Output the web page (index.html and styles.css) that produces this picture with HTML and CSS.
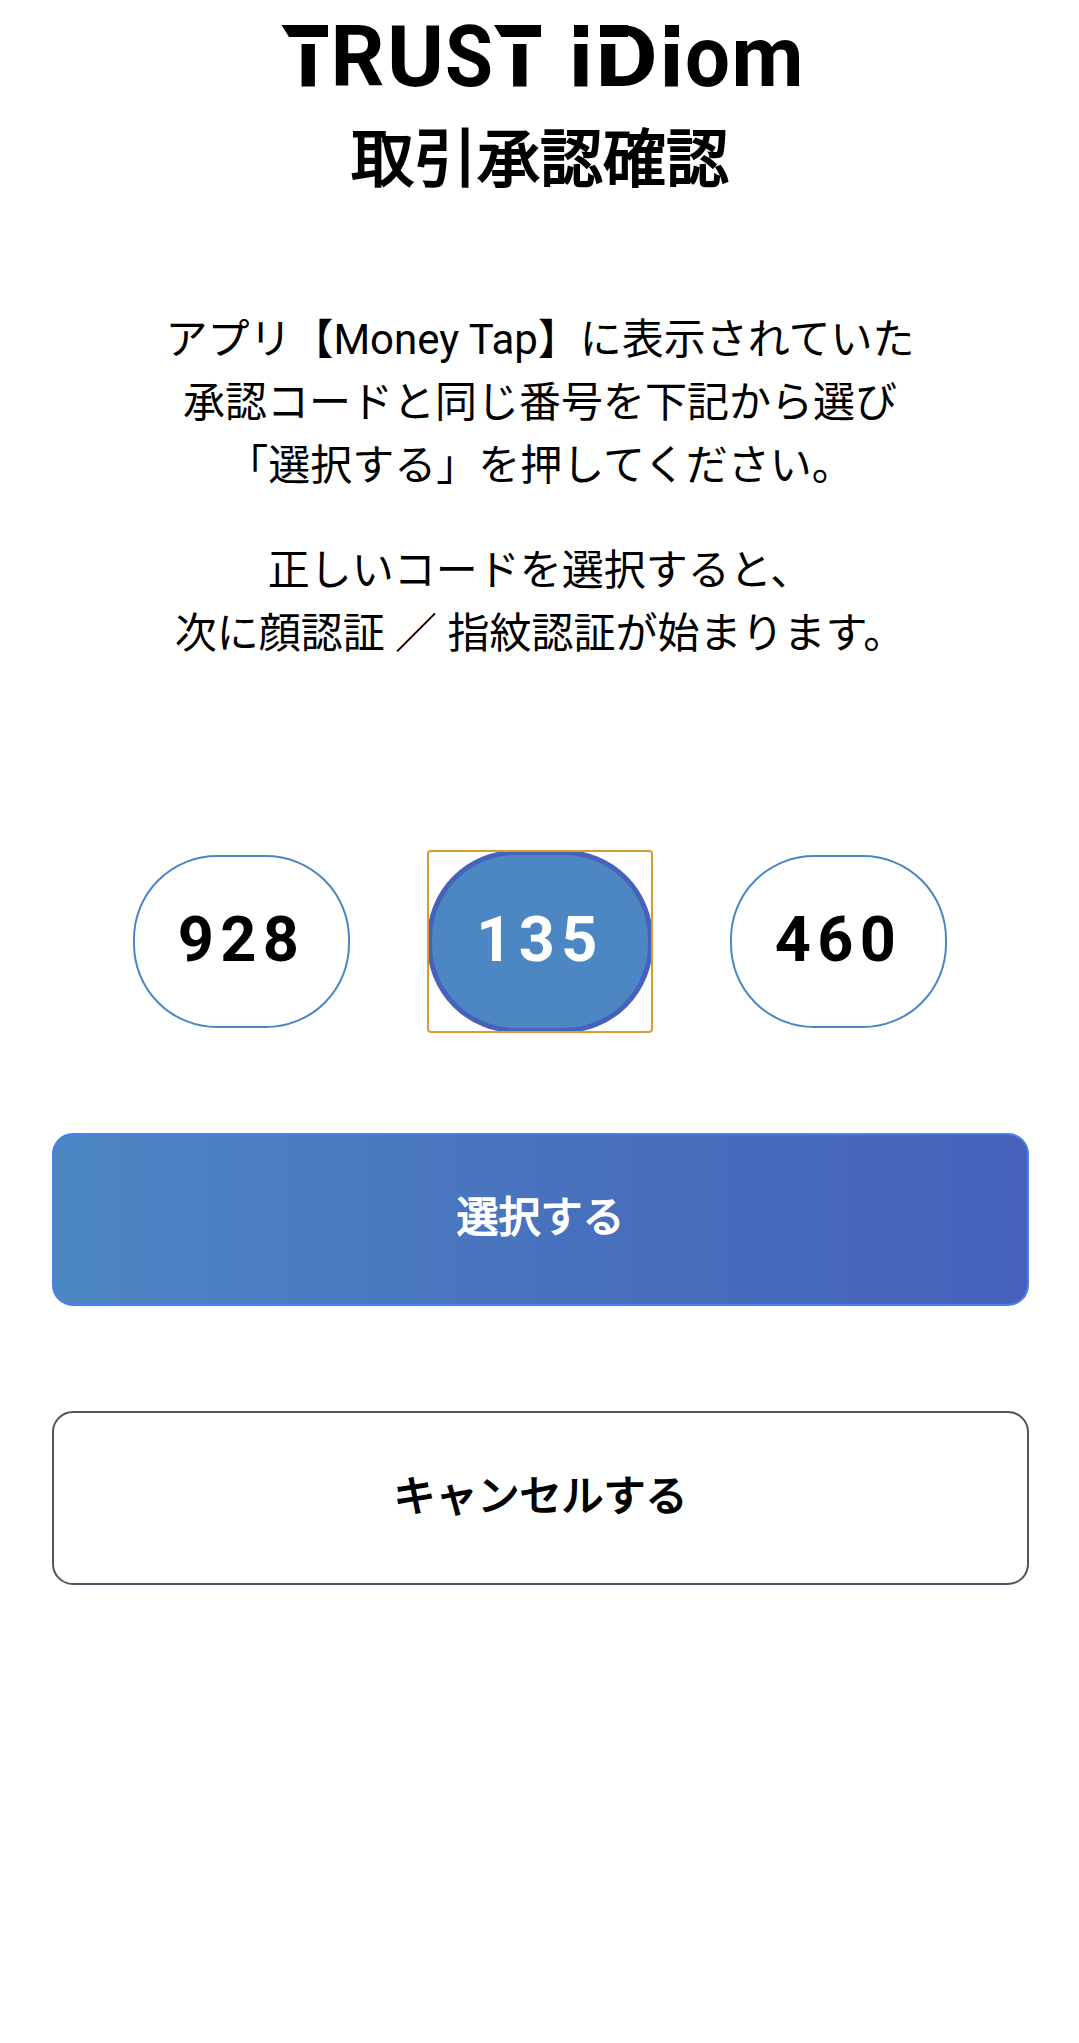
FILE: index.html
```html
<!DOCTYPE html>
<html lang="ja">
<head>
<meta charset="utf-8">
<title>取引承認確認</title>
<link rel="stylesheet" href="styles.css">
</head>
<body>
<main class="page">
  <header class="header">
    <svg class="logo" viewBox="280 20 520 70" role="img" aria-label="TRUST iDiom">
      <g class="logo-text">
        <text class="logo-stem" x="281.7" y="86">T</text>
        <text x="330.5" y="86" textLength="54" lengthAdjust="spacingAndGlyphs">R</text>
        <text x="387" y="86" textLength="57" lengthAdjust="spacingAndGlyphs">U</text>
        <text x="445" y="86" textLength="48" lengthAdjust="spacingAndGlyphs">S</text>
        <text class="logo-stem" x="493.2" y="86">T</text>
        <text class="logo-stem" x="569.5" y="86">i</text>
        <text x="595" y="86" textLength="63" lengthAdjust="spacingAndGlyphs">D</text>
        <text class="logo-stem" x="660" y="86">i</text>
        <text x="685" y="86" textLength="45" lengthAdjust="spacingAndGlyphs">o</text>
        <text x="731.5" y="86" textLength="72" lengthAdjust="spacingAndGlyphs">m</text>
      </g>
      <g class="logo-gap">
        <rect x="280" y="20" width="54" height="24"/>
        <rect x="493" y="20" width="53" height="24"/>
        <rect x="568" y="18" width="26" height="26"/>
        <rect x="598" y="36" width="22" height="8"/>
        <rect x="661" y="18" width="21" height="26"/>
      </g>
      <path d="M281.5 25H328V37H289ZM494 25H541V37H501.500ZM574 25H588V37H574ZM600 25H628V37H600ZM665 25H679V37H665Z"/>
    </svg>
    <h1 class="title">取引承認確認</h1>
  </header>
  <section class="guide">
    <p>アプリ【Money Tap】に表示されていた<br>承認コードと同じ番号を下記から選び<br>「選択する」を押してください。</p>
    <p>正しいコードを選択すると、<br>次に顔認証 ／ 指紋認証が始まります。</p>
  </section>
  <div class="codes">
    <button class="code">928</button>
    <button class="code code-selected">135</button>
    <button class="code">460</button>
  </div>
  <div class="actions">
    <button class="action action-primary">選択する</button>
    <button class="action">キャンセルする</button>
  </div>
</main>
</body>
</html>
```
FILE: styles.css
```css
* { box-sizing: border-box; }
body {
  margin: 0;
  background: #fff;
  color: #000;
  font-family: Roboto, "Noto Sans CJK JP", sans-serif;
}
button { font-family: inherit; margin: 0; padding: 0; }
.page {
  min-height: 2043px;
  padding: 20px 51px 0 52px;
}
.header {
  display: flex;
  flex-direction: column;
  align-items: center;
}
.logo { display: block; width: 520px; height: 70px; overflow: visible; }
.logo-text { font: 700 86px Roboto, sans-serif; }
.logo-stem { stroke: #000; stroke-width: 0.8px; }
.logo-gap { fill: #fff; }
.title {
  margin: 23px 0 0;
  font-size: 63px;
  line-height: 94px;
  font-weight: 400;
  -webkit-text-stroke: 2px currentColor;
}
.guide {
  margin-top: 101px;
  font-size: 42px;
  line-height: 63px;
  text-align: center;
  white-space: nowrap;
}
.guide p { margin: 0 0 42px; }
.codes {
  display: flex;
  justify-content: center;
  align-items: center;
  gap: 77px;
  margin-top: 185px;
}
.code {
  width: 217px;
  height: 173px;
  padding-bottom: 5px;
  border: 2px solid #4c86c6;
  border-radius: 84px;
  background: #fff;
  color: #000;
  font-size: 63px;
  font-weight: 700;
  letter-spacing: 6.3px;
}
.code-selected {
  position: relative;
  width: 226px;
  height: 183px;
  border: 5px solid #4762bc;
  border-radius: 89px;
  background: #4c86c3;
  color: #fff;
}
.code-selected::after {
  content: "";
  position: absolute;
  inset: -5px;
  border: 2px solid #dc9a35;
  border-radius: 4px;
}
.actions {
  display: flex;
  flex-direction: column;
  gap: 105px;
  margin: 100px -1px 0 0;
}
.action {
  height: 173px;
  padding-bottom: 12px;
  border: 2px solid #4b5563;
  border-radius: 21px;
  background: #fff;
  color: #000;
  font-size: 42px;
  font-weight: 400;
  -webkit-text-stroke: 1.5px currentColor;
}
.action:last-child { height: 174px; }
.action-primary {
  border-color: #4a80ee;
  background: linear-gradient(90deg, #4c86c4, #4872bd 50%, #4561ba);
  color: #fff;
}
```
